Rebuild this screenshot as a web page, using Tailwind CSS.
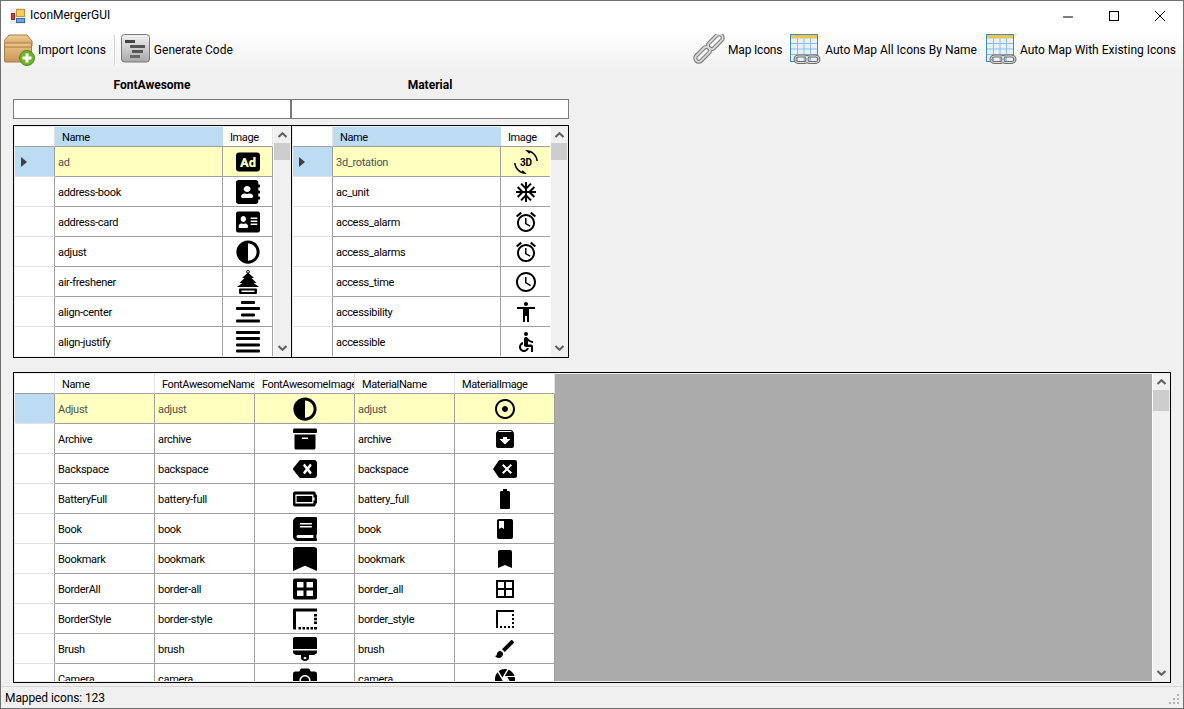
<!DOCTYPE html>
<html lang="en">

<head>
  <meta charset="UTF-8">
  <title>IconMergerGUI</title>
  <script src="https://cdn.jsdelivr.net/npm/@tailwindcss/browser@4"></script>
</head>

<body class="w-[1184px] h-[709px] overflow-hidden flex flex-col bg-[#f0f0f0] border border-[#707070] text-black text-[12px] [font-family:Roboto,sans-serif]">
  <!-- title bar -->
  <div class="h-[30px] shrink-0 bg-white flex items-center pl-[9px]">
    <svg width="16" height="16" viewBox="0 0 16 16">
      <rect x="0" y="0" width="16" height="16" fill="#ececec" />
      <rect x="6.500" y="1.500" width="8" height="7" fill="#f7cc55" stroke="#b8973f" />
      <rect x="1.500" y="5.500" width="3" height="6" fill="#d8433a" stroke="#8a2a24" />
      <rect x="6.500" y="10.500" width="8" height="4" fill="#6aa2e4" stroke="#3a6cac" />
    </svg>
    <span class="ml-[4px] mb-[2px] text-[12px]">IconMergerGUI</span>
    <div class="ml-auto flex items-center">
      <div class="w-[46px] h-[30px] flex items-center justify-center">
        <svg width="12" height="12" viewBox="0 0 12 12"><path d="M1 7h10" stroke="#000" fill="none" /></svg>
      </div>
      <div class="w-[46px] h-[30px] flex items-center justify-center">
        <svg width="12" height="12" viewBox="0 0 12 12"><rect x="1.500" y="1.500" width="9" height="9" stroke="#000" fill="none" /></svg>
      </div>
      <div class="w-[46px] h-[30px] flex items-center justify-center">
        <svg width="12" height="12" viewBox="0 0 12 12"><path d="M1 1l10 10M11 1L1 11" stroke="#000" fill="none" /></svg>
      </div>
    </div>
  </div>

  <!-- toolbar -->
  <div class="h-[41px] shrink-0 flex items-center justify-between pb-[3px] pl-[3px] pr-[7px] bg-gradient-to-b from-white to-[#f0f0f0]">
    <div class="flex items-center">
      <svg width="32" height="32" viewBox="0 0 32 32">
        <defs>
          <linearGradient id="boxTop" x1="0" y1="0" x2="0" y2="1"><stop offset="0" stop-color="#f0d09a" /><stop offset="1" stop-color="#cf9f5c" /></linearGradient>
          <linearGradient id="boxFront" x1="0" y1="0" x2="0" y2="1"><stop offset="0" stop-color="#eec488" /><stop offset="1" stop-color="#c8945a" /></linearGradient>
        </defs>
        <path d="M5 1h18l5 6v5H0V7z" fill="url(#boxTop)" stroke="#a67c45" />
        <rect x="0.500" y="9" width="27" height="19" rx="1" fill="url(#boxFront)" stroke="#a67c45" />
        <path d="M1 13h26" stroke="#a67c45" />
        <circle cx="23" cy="24" r="7.500" fill="#6fb52c" stroke="#4c8a18" />
        <path d="M23 19.500v9M18.500 24h9" stroke="#fff" stroke-width="3" />
      </svg>
      <span class="ml-[2px]">Import Icons</span>
      <div class="w-[2px] h-[30px] ml-[8px] mr-[3px] bg-[#d4d4d4] border-r border-white"></div>
      <svg width="32" height="32" viewBox="0 0 32 32">
        <defs>
          <linearGradient id="genBg" x1="0" y1="0" x2="0" y2="1"><stop offset="0" stop-color="#f2f2f2" /><stop offset="1" stop-color="#a8a8a8" /></linearGradient>
        </defs>
        <rect x="2.500" y="0.500" width="28" height="27.500" rx="3" fill="url(#genBg)" stroke="#777" />
        <rect x="6" y="6" width="10" height="3" fill="#444" />
        <rect x="11" y="11" width="15" height="3" fill="#555" />
        <rect x="13" y="16" width="11" height="3" fill="#555" />
        <rect x="11" y="21" width="10" height="3" fill="#666" />
      </svg>
      <span class="ml-[3px]">Generate Code</span>
    </div>
    <div class="flex items-center">
      <svg width="32" height="32" viewBox="0 0 32 32">
        <g fill="none" transform="rotate(45 16 14)">
          <g stroke="#7d7d7d" stroke-width="4">
            <rect x="12.500" y="-4" width="7" height="18" rx="3.500" />
            <rect x="12.500" y="14" width="7" height="18" rx="3.500" />
          </g>
          <g stroke="#dcdcdc" stroke-width="1.800">
            <rect x="12.500" y="-4" width="7" height="18" rx="3.500" />
            <rect x="12.500" y="14" width="7" height="18" rx="3.500" />
          </g>
        </g>
      </svg>
      <span class="ml-[3px] tracking-[-0.2px]">Map Icons</span>
      <svg class="ml-[7px]" width="32" height="32" viewBox="0 0 32 32">
        <rect x="1.500" y="0.500" width="27" height="27" fill="#e6f1fa" stroke="#3c8cc4" />
        <rect x="2" y="1" width="26" height="3.500" fill="#f4c44c" />
        <path d="M2 9.500h26M2 15h26M2 20.500h26M8.500 4.500V27M15 4.500V27M21.500 4.500V27" stroke="#8cbce0" fill="none" />
        <g fill="none">
          <rect x="6" y="22" width="13" height="6.500" rx="3.200" stroke="#6e6e6e" stroke-width="3" />
          <rect x="17" y="22" width="13" height="6.500" rx="3.200" stroke="#6e6e6e" stroke-width="3" />
          <rect x="6" y="22" width="13" height="6.500" rx="3.200" stroke="#e0e0e0" stroke-width="1" />
          <rect x="17" y="22" width="13" height="6.500" rx="3.200" stroke="#e0e0e0" stroke-width="1" />
        </g>
      </svg>
      <span class="ml-[4px]">Auto Map All Icons By Name</span>
      <svg class="ml-[8px]" width="32" height="32" viewBox="0 0 32 32">
        <rect x="1.500" y="0.500" width="27" height="27" fill="#e6f1fa" stroke="#3c8cc4" />
        <rect x="2" y="1" width="26" height="3.500" fill="#f4c44c" />
        <path d="M2 9.500h26M2 15h26M2 20.500h26M8.500 4.500V27M15 4.500V27M21.500 4.500V27" stroke="#8cbce0" fill="none" />
        <g fill="none">
          <rect x="6" y="22" width="13" height="6.500" rx="3.200" stroke="#6e6e6e" stroke-width="3" />
          <rect x="17" y="22" width="13" height="6.500" rx="3.200" stroke="#6e6e6e" stroke-width="3" />
          <rect x="6" y="22" width="13" height="6.500" rx="3.200" stroke="#e0e0e0" stroke-width="1" />
          <rect x="17" y="22" width="13" height="6.500" rx="3.200" stroke="#e0e0e0" stroke-width="1" />
        </g>
      </svg>
      <span class="ml-[3px]">Auto Map With Existing Icons</span>
    </div>
  </div>

  <!-- main area -->
  <div class="pl-[12px] shrink-0">
    <div class="flex h-[27px] pb-[2px] items-center font-bold">
      <div class="w-[278px] text-center">FontAwesome</div>
      <div class="w-[278px] text-center">Material</div>
    </div>
    <div class="flex mb-[6px]">
      <input class="w-[278px] h-[20px] bg-white border border-[#7a7a7a]">
      <input class="w-[278px] h-[20px] bg-white border border-[#7a7a7a]">
    </div>
    <div class="flex">
      <div id="fa-grid" class="w-[278px] h-[233px]"></div>
      <div id="material-grid" class="w-[278px] h-[233px]"></div>
    </div>
    <div id="map-grid" class="w-[1158px] h-[311px] mt-[14px]"></div>
  </div>

  <!-- status bar -->
  <div class="flex-1 mt-[3px] border-t border-[#d9d9d9] flex items-center justify-between pl-[4px] pr-[3px] relative">
    <span class="tracking-[-0.1px]">Mapped icons: 123</span>
    <svg class="absolute right-[3px] bottom-[3px]" width="12" height="12" viewBox="0 0 12 12" fill="#b4b4b4">
      <rect x="9" y="1" width="2" height="2" />
      <rect x="5" y="5" width="2" height="2" />
      <rect x="9" y="5" width="2" height="2" />
      <rect x="1" y="9" width="2" height="2" />
      <rect x="5" y="9" width="2" height="2" />
      <rect x="9" y="9" width="2" height="2" />
    </svg>
  </div>

  <script>
    // [viewBox, inner svg]
    const icons = {
      'fa-ad': ['0 0 24 24', '<rect x="0" y="2.500" width="24" height="19" rx="3" fill="#000"/><text x="12" y="16.500" text-anchor="middle" font-family="Roboto" font-weight="900" font-size="13" fill="#ffffc0">Ad</text>'],
      'fa-address-book': ['0 0 448 512', '<path d="M436 160c6.6 0 12-5.4 12-12v-40c0-6.6-5.4-12-12-12h-20V48c0-26.5-21.5-48-48-48H48C21.5 0 0 21.5 0 48v416c0 26.5 21.5 48 48 48h320c26.5 0 48-21.5 48-48v-48h20c6.6 0 12-5.4 12-12v-40c0-6.6-5.4-12-12-12h-20v-64h20c6.6 0 12-5.4 12-12v-40c0-6.6-5.4-12-12-12h-20v-64h20zm-228-32c35.3 0 64 28.7 64 64s-28.7 64-64 64-64-28.7-64-64 28.7-64 64-64zm112 236.8c0 10.6-10 19.2-22.4 19.2H118.4C106 384 96 375.4 96 364.8v-19.2c0-31.8 30.1-57.6 67.2-57.6h5c12.3 5.1 25.7 8 39.8 8s27.6-2.9 39.8-8h5c37.1 0 67.2 25.8 67.2 57.6v19.2z"/>'],
      'fa-address-card': ['0 0 576 512', '<path d="M528 32H48C21.5 32 0 53.5 0 80v352c0 26.5 21.5 48 48 48h480c26.5 0 48-21.5 48-48V80c0-26.5-21.5-48-48-48zm-352 96c35.3 0 64 28.7 64 64s-28.7 64-64 64-64-28.7-64-64 28.7-64 64-64zm112 236.8c0 10.6-10 19.2-22.4 19.2H86.4C74 384 64 375.4 64 364.8v-19.2c0-31.8 30.1-57.6 67.2-57.6h5c12.3 5.1 25.7 8 39.8 8s27.6-2.9 39.8-8h5c37.1 0 67.2 25.8 67.2 57.6v19.2zM512 312c0 4.4-3.6 8-8 8H360c-4.4 0-8-3.6-8-8v-16c0-4.4 3.6-8 8-8h144c4.4 0 8 3.6 8 8v16zm0-64c0 4.4-3.6 8-8 8H360c-4.4 0-8-3.6-8-8v-16c0-4.4 3.6-8 8-8h144c4.4 0 8 3.6 8 8v16zm0-64c0 4.4-3.6 8-8 8H360c-4.4 0-8-3.6-8-8v-16c0-4.4 3.6-8 8-8h144c4.4 0 8 3.6 8 8v16z"/>'],
      'fa-adjust': ['0 0 512 512', '<path d="M8 256c0 136.966 111.033 248 248 248s248-111.034 248-248S392.966 8 256 8 8 119.033 8 256zm248 184V72c101.705 0 184 82.311 184 184 0 101.705-82.311 184-184 184z"/>'],
      'fa-air-freshener': ['0 0 24 24', '<circle cx="12" cy="1.8" r="1.4" fill="none" stroke="#000"/><path d="M12 2.5l6 5.5h-2.5l5 5h-3l5.5 4H1l5.500-4h-3l5-5H6z"/><path fill-rule="evenodd" d="M4 18.500h16a1 1 0 0 1 1 1V23a1 1 0 0 1-1 1H4a1 1 0 0 1-1-1v-3.500a1 1 0 0 1 1-1zM5.500 20.500v1.500h13v-1.500z"/>'],
      'fa-align-center': ['0 0 24 24', '<rect x="5" y="1" width="14" height="3" rx="1"/><rect x="0" y="7" width="24" height="3" rx="1"/><rect x="5" y="13.500" width="14" height="3" rx="1"/><rect x="0" y="19.500" width="24" height="3" rx="1"/>'],
      'fa-align-justify': ['0 0 24 24', '<rect x="0" y="1" width="24" height="3" rx="1"/><rect x="0" y="7" width="24" height="3" rx="1"/><rect x="0" y="13.500" width="24" height="3" rx="1"/><rect x="0" y="19.500" width="24" height="3" rx="1"/>'],
      'fa-archive': ['0 0 512 512', '<path d="M32 448c0 17.7 14.3 32 32 32h384c17.7 0 32-14.3 32-32V160H32v288zm160-212c0-6.600 5.400-12 12-12h104c6.600 0 12 5.400 12 12v8c0 6.600-5.400 12-12 12H204c-6.600 0-12-5.400-12-12v-8zM480 32H32C14.300 32 0 46.300 0 64v48c0 8.800 7.200 16 16 16h480c8.800 0 16-7.200 16-16V64c0-17.700-14.300-32-32-32z"/>'],
      'fa-backspace': ['0 0 640 512', '<path d="M576 64H205.260A63.970 63.970 0 0 0 160 82.750L9.370 233.370c-12.500 12.500-12.500 32.760 0 45.250L160 429.250c12 12 28.280 18.750 45.250 18.750H576c35.350 0 64-28.650 64-64V128c0-35.350-28.650-64-64-64zm-84.690 254.060c6.250 6.250 6.250 16.380 0 22.630l-22.620 22.620c-6.250 6.250-16.380 6.250-22.630 0L384 301.250l-62.060 62.060c-6.250 6.250-16.380 6.250-22.630 0l-22.620-22.620c-6.250-6.250-6.250-16.380 0-22.630L338.750 256l-62.060-62.060c-6.250-6.250-6.250-16.380 0-22.630l22.620-22.620c6.250-6.250 16.380-6.250 22.630 0L384 210.750l62.060-62.060c6.250-6.250 16.380-6.250 22.630 0l22.620 22.620c6.250 6.250 6.250 16.380 0 22.630L429.250 256l62.060 62.060z"/>'],
      'fa-battery-full': ['0 0 640 512', '<path d="M544 160v64h32v64h-32v64H64V160h480m16-64H48c-26.510 0-48 21.490-48 48v224c0 26.510 21.490 48 48 48h512c26.510 0 48-21.490 48-48v-16h8c13.255 0 24-10.745 24-24V184c0-13.255-10.745-24-24-24h-8v-16c0-26.510-21.490-48-48-48zm-48 96H96v128h416V192z"/>'],
      'fa-book': ['0 0 448 512', '<path d="M448 360V24c0-13.300-10.700-24-24-24H96C43 0 0 43 0 96v320c0 53 43 96 96 96h328c13.300 0 24-10.700 24-24v-16c0-7.500-3.500-14.300-8.900-18.700-4.200-15.400-4.200-59.300 0-74.700 5.400-4.300 8.900-11.100 8.900-18.600zM128 134c0-3.300 2.700-6 6-6h212c3.300 0 6 2.700 6 6v20c0 3.300-2.700 6-6 6H134c-3.300 0-6-2.700-6-6v-20zm0 64c0-3.300 2.700-6 6-6h212c3.300 0 6 2.700 6 6v20c0 3.300-2.700 6-6 6H134c-3.300 0-6-2.700-6-6v-20zm253.400 250H96c-17.700 0-32-14.300-32-32 0-17.600 14.400-32 32-32h285.400c-1.900 17.100-1.900 46.900 0 64z"/>'],
      'fa-bookmark': ['0 0 384 512', '<path d="M0 512V48C0 21.490 21.490 0 48 0h288c26.510 0 48 21.490 48 48v464L192 400 0 512z"/>'],
      'fa-border-all': ['0 0 24 24', '<path fill-rule="evenodd" d="M2 1.500h20a2 2 0 0 1 2 2v17a2 2 0 0 1-2 2H2a2 2 0 0 1-2-2v-17a2 2 0 0 1 2-2zM4 5v5.500h6.500V5zm9.500 0v5.500H20V5zM4 13.500V19h6.500v-5.500zm9.500 0V19H20v-5.500z"/>'],
      'fa-border-style': ['0 0 24 24', '<path d="M1 1.500h23v3H3v18H1a1 1 0 0 1-1-1v-19a1 1 0 0 1 1-1z"/><rect x="21" y="7" width="3" height="2.500"/><rect x="21" y="10.800" width="3" height="2.500"/><rect x="21" y="14.500" width="3" height="2.500"/><rect x="21" y="20" width="3" height="2.500"/><rect x="5.500" y="20" width="2.500" height="2.500"/><rect x="9.500" y="20" width="2.500" height="2.500"/><rect x="13.500" y="20" width="2.500" height="2.500"/><rect x="17.500" y="20" width="2.500" height="2.500"/>'],
      'fa-brush': ['0 0 384 512', '<path d="M352 0H32C14.330 0 0 14.330 0 32v224h384V32c0-17.670-14.330-32-32-32zM0 320c0 35.350 28.660 64 64 64h64v64c0 35.350 28.660 64 64 64s64-28.650 64-64v-64h64c35.340 0 64-28.650 64-64v-32H0v32zm192 104c13.250 0 24 10.740 24 24 0 13.250-10.750 24-24 24s-24-10.750-24-24c0-13.260 10.750-24 24-24z"/>'],
      'fa-camera': ['0 0 512 512', '<path d="M512 144v288c0 26.500-21.500 48-48 48H48c-26.500 0-48-21.500-48-48V144c0-26.500 21.500-48 48-48h88l12.300-32.900c7-18.700 24.900-31.100 44.900-31.100h125.500c20 0 37.900 12.400 44.900 31.100L376 96h88c26.500 0 48 21.500 48 48zM376 288c0-66.200-53.800-120-120-120s-120 53.800-120 120 53.800 120 120 120 120-53.800 120-120zm-32 0c0 48.500-39.500 88-88 88s-88-39.500-88-88 39.500-88 88-88 88 39.500 88 88z"/>'],
      'md-3d_rotation': ['0 0 24 24', '<path d="M7.520 21.480C4.250 19.940 1.910 16.760 1.550 13H.05C.56 19.160 5.710 24 12 24l.66-.03-3.810-3.810-1.330 1.320zM12 0l-.66.03 3.810 3.810 1.330-1.330c3.270 1.550 5.610 4.720 5.960 8.480h1.500C23.440 4.840 18.290 0 12 0z"/><text x="12" y="16" text-anchor="middle" font-family="Roboto" font-weight="700" font-size="10">3D</text>'],
      'md-ac_unit': ['0 0 24 24', '<path d="M22 11h-4.170l3.240-3.240-1.410-1.420L15 11h-2V9l4.660-4.660-1.420-1.410L13 6.170V2h-2v4.170L7.760 2.930 6.340 4.340 11 9v2H9L4.340 6.340 2.930 7.760 6.170 11H2v2h4.170l-3.240 3.240 1.410 1.420L9 13h2v2l-4.660 4.660 1.420 1.410L11 17.830V22h2v-4.170l3.240 3.240 1.420-1.410L13 15v-2h2l4.660 4.660 1.410-1.420L17.830 13H22z"/>'],
      'md-access_alarm': ['0 0 24 24', '<path d="M22 5.720l-4.600-3.860-1.290 1.530 4.600 3.860L22 5.720zM7.880 3.390L6.600 1.860 2 5.710l1.290 1.530 4.590-3.850zM12.500 8H11v6l4.750 2.850.75-1.230-4-2.370V8zM12 4c-4.970 0-9 4.030-9 9s4.030 9 9 9 9-4.030 9-9-4.030-9-9-9zm0 16c-3.870 0-7-3.130-7-7s3.130-7 7-7 7 3.130 7 7-3.130 7-7 7z"/>'],
      'md-access_time': ['0 0 24 24', '<path d="M11.990 2C6.470 2 2 6.480 2 12s4.470 10 9.990 10C17.520 22 22 17.520 22 12S17.520 2 11.990 2zM12 20c-4.420 0-8-3.580-8-8s3.580-8 8-8 8 3.580 8 8-3.580 8-8 8zm.5-13H11v6l5.250 3.150.75-1.230-4.500-2.670z"/>'],
      'md-accessibility': ['0 0 24 24', '<path d="M12 2c1.100 0 2 .9 2 2s-.9 2-2 2-2-.9-2-2 .9-2 2-2zm9 7h-6v13h-2v-6h-2v6H9V9H3V7h18v2z"/>'],
      'md-accessible': ['0 0 24 24', '<circle cx="12" cy="4" r="2"/><path d="M19 13v-2c-1.540.02-3.090-.75-4.070-1.830l-1.290-1.430c-.17-.19-.38-.34-.61-.45-.01 0-.01-.01-.02-.01H13c-.35-.2-.75-.3-1.190-.26C10.760 7.110 10 8.040 10 9.090V15c0 1.100.9 2 2 2h5v5h2v-5.500c0-1.100-.9-2-2-2h-3v-3.450c1.290 1.070 3.250 1.940 5 1.950zm-6.170 5c-.41 1.160-1.520 2-2.830 2-1.660 0-3-1.340-3-3 0-1.310.84-2.410 2-2.830V12.100c-2.280.46-4 2.480-4 4.900 0 2.760 2.240 5 5 5 2.420 0 4.440-1.720 4.900-4h-2.070z"/>'],
      'md-adjust': ['0 0 24 24', '<path d="M12 2C6.480 2 2 6.480 2 12s4.480 10 10 10 10-4.480 10-10S17.520 2 12 2zm0 18c-4.420 0-8-3.580-8-8s3.580-8 8-8 8 3.580 8 8-3.580 8-8 8zm3-8c0 1.660-1.340 3-3 3s-3-1.340-3-3 1.340-3 3-3 3 1.340 3 3z"/>'],
      'md-archive': ['0 0 24 24', '<path d="M20.540 5.230l-1.390-1.680C18.880 3.210 18.470 3 18 3H6c-.47 0-.88.21-1.160.55L3.460 5.230C3.170 5.570 3 6.020 3 6.500V19c0 1.100.9 2 2 2h14c1.100 0 2-.9 2-2V6.500c0-.48-.17-.93-.46-1.270zM12 17.500L6.500 12H10v-2h4v2h3.500L12 17.500zM5.120 5l.81-1h12l.94 1H5.120z"/>'],
      'md-backspace': ['0 0 24 24', '<path d="M22 3H7c-.69 0-1.230.35-1.590.88L0 12l5.410 8.110c.36.53.9.89 1.590.89h15c1.100 0 2-.9 2-2V5c0-1.100-.9-2-2-2zm-3 12.590L17.590 17 14 13.410 10.410 17 9 15.590 12.590 12 9 8.410 10.410 7 14 10.590 17.590 7 19 8.410 15.410 12 19 15.590z"/>'],
      'md-battery_full': ['0 0 24 24', '<path d="M15.670 4H14V2h-4v2H8.330C7.600 4 7 4.600 7 5.330v15.330C7 21.400 7.600 22 8.330 22h7.330c.74 0 1.340-.6 1.340-1.330V5.330C17 4.600 16.400 4 15.670 4z"/>'],
      'md-book': ['0 0 24 24', '<path d="M18 2H6c-1.100 0-2 .9-2 2v16c0 1.100.9 2 2 2h12c1.100 0 2-.9 2-2V4c0-1.100-.9-2-2-2zM6 4h5v8l-2.500-1.500L6 12V4z"/>'],
      'md-bookmark': ['0 0 24 24', '<path d="M17 3H7c-1.100 0-1.990.9-1.990 2L5 21l7-3 7 3V5c0-1.100-.9-2-2-2z"/>'],
      'md-border_all': ['0 0 24 24', '<path d="M3 3v18h18V3H3zm8 16H5v-6h6v6zm0-8H5V5h6v6zm8 8h-6v-6h6v6zm0-8h-6V5h6v6z"/>'],
      'md-border_style': ['0 0 24 24', '<path d="M15 21h2v-2h-2v2zm4 0h2v-2h-2v2zM7 21h2v-2H7v2zm4 0h2v-2h-2v2zm8-4h2v-2h-2v2zm0-4h2v-2h-2v2zM3 3v18h2V5h16V3H3zm16 6h2V7h-2v2z"/>'],
      'md-brush': ['0 0 24 24', '<path d="M7 14c-1.660 0-3 1.340-3 3 0 1.310-1.160 2-2 2 .92 1.220 2.490 2 4 2 2.210 0 4-1.790 4-4 0-1.660-1.340-3-3-3zm13.710-9.370l-1.340-1.340c-.39-.39-1.020-.39-1.410 0L9 12.250 11.750 15l8.960-8.960c.39-.39.39-1.020 0-1.410z"/>'],
      'md-camera': ['0 0 24 24', '<path d="M9.400 10.500l4.770-8.260C13.470 2.090 12.750 2 12 2c-2.400 0-4.600.85-6.320 2.250l3.660 6.350.06-.1zM21.540 9c-.92-2.920-3.150-5.260-6-6.340L11.880 9h9.660zm.26 1h-7.490l.29.5 4.760 8.250C21 16.970 22 14.610 22 12c0-.69-.07-1.350-.2-2zM8.540 12l-3.900-6.750C3.010 7.030 2 9.390 2 12c0 .69.07 1.350.2 2h7.490l-1.150-2zm-6.080 3c.92 2.920 3.150 5.260 6 6.340L12.120 15H2.460zm11.270 0l-3.900 6.760c.7.15 1.420.24 2.170.24 2.400 0 4.600-.85 6.320-2.250l-3.660-6.350-.93 1.600z"/>'],
    }

    const icon = (key) => {
      const [box, body] = icons[key]
      return `<svg class="w-[24px] h-[24px] shrink-0" viewBox="${box}" preserveAspectRatio="none">${body}</svg>`
    }

    const chevron = (points) => `
      <div class="h-[16px] shrink-0 flex items-center justify-center">
        <svg width="9" height="6" viewBox="0 0 9 6"><polyline points="${points}" fill="none" stroke="#606060" stroke-width="2" /></svg>
      </div>`

    const scrollbar = (thumb) => `
      <div class="w-[17px] shrink-0 flex flex-col bg-[#f0f0f0] border-l border-white">
        ${chevron('0.5,5 4.5,1.200 8.500,5')}
        <div class="${thumb} shrink-0 bg-[#cdcdcd]"></div>
        <div class="flex-1"></div>
        ${chevron('0.5,1 4.5,4.800 8.500,1')}
      </div>`

    // columns: { title, width, image }
    const renderGrid = (el, { columns, rows, arrow, thumb, rest, noRight }) => {
      const head = columns.map(c => `
        <div class="${c.width} ${c.active ? 'bg-[#bcdcf4]' : 'bg-white border-r border-r-[#e3e3e3]'} shrink-0 h-[20px] pt-[4px] pl-[7px] border-b border-b-[#a0a0a0] overflow-hidden whitespace-nowrap flex items-center tracking-[-0.4px]">${c.title}</div>`).join('')

      const body = rows.map((row, i) => {
        const selected = i === 0
        const cells = row.map((value, n) => {
          const col = columns[n]
          return `<div class="${col.width} shrink-0 h-[30px] border-r border-b border-[#a0a0a0] flex items-center overflow-hidden whitespace-nowrap ${col.image ? 'justify-center' : 'pl-[3px] pt-[4px] tracking-[-0.3px]'}">${col.image ? icon(value) : value}</div>`
        }).join('')
        return `
          <div class="flex w-max ${selected ? 'bg-[#ffffc0] text-[#505050]' : 'bg-white'}">
            <div class="w-[40px] shrink-0 h-[30px] flex items-center border-r border-r-[#a0a0a0] border-b border-b-[#e3e3e3] ${selected ? 'bg-[#bcdcf4]' : 'bg-white'} pl-[6px]">
              ${selected && arrow ? '<svg width="6" height="10" viewBox="0 0 6 10"><polygon points="0,0 6,5 0,10" fill="#404040" /></svg>' : ''}
            </div>
            ${cells}
          </div>`
      }).join('')

      el.innerHTML = `
        <div class="w-full h-full border border-black ${noRight ? 'border-r-0' : ''}">
          <div class="w-full h-full border border-[#f0f0f0] flex bg-[#f0f0f0] text-[11px]">
            <div class="flex flex-col overflow-hidden ${rest ? 'flex-1 bg-[#ababab]' : ''}">
              <div class="flex w-max shrink-0">
                <div class="w-[40px] h-[20px] shrink-0 bg-white border-r border-r-[#e3e3e3] border-b border-b-[#a0a0a0]"></div>
                ${head}
              </div>
              ${body}
            </div>
            ${scrollbar(thumb)}
          </div>
        </div>`
    }

    const pickerColumns = [
      { title: 'Name', width: 'w-[168px]', active: true },
      { title: 'Image', width: 'w-[50px]', image: true },
    ]

    renderGrid(document.getElementById('fa-grid'), {
      columns: pickerColumns,
      arrow: true,
      noRight: true,
      thumb: 'h-[17px]',
      rows: [
        ['ad', 'fa-ad'],
        ['address-book', 'fa-address-book'],
        ['address-card', 'fa-address-card'],
        ['adjust', 'fa-adjust'],
        ['air-freshener', 'fa-air-freshener'],
        ['align-center', 'fa-align-center'],
        ['align-justify', 'fa-align-justify'],
      ],
    })

    renderGrid(document.getElementById('material-grid'), {
      columns: pickerColumns,
      arrow: true,
      thumb: 'h-[17px]',
      rows: [
        ['3d_rotation', 'md-3d_rotation'],
        ['ac_unit', 'md-ac_unit'],
        ['access_alarm', 'md-access_alarm'],
        ['access_alarms', 'md-access_alarm'],
        ['access_time', 'md-access_time'],
        ['accessibility', 'md-accessibility'],
        ['accessible', 'md-accessible'],
      ],
    })

    renderGrid(document.getElementById('map-grid'), {
      columns: [
        { title: 'Name', width: 'w-[100px]' },
        { title: 'FontAwesomeName', width: 'w-[100px]' },
        { title: 'FontAwesomeImage', width: 'w-[100px]', image: true },
        { title: 'MaterialName', width: 'w-[100px]' },
        { title: 'MaterialImage', width: 'w-[100px]', image: true },
      ],
      thumb: 'h-[21px]',
      rest: true,
      rows: [
        ['Adjust', 'adjust', 'fa-adjust', 'adjust', 'md-adjust'],
        ['Archive', 'archive', 'fa-archive', 'archive', 'md-archive'],
        ['Backspace', 'backspace', 'fa-backspace', 'backspace', 'md-backspace'],
        ['BatteryFull', 'battery-full', 'fa-battery-full', 'battery_full', 'md-battery_full'],
        ['Book', 'book', 'fa-book', 'book', 'md-book'],
        ['Bookmark', 'bookmark', 'fa-bookmark', 'bookmark', 'md-bookmark'],
        ['BorderAll', 'border-all', 'fa-border-all', 'border_all', 'md-border_all'],
        ['BorderStyle', 'border-style', 'fa-border-style', 'border_style', 'md-border_style'],
        ['Brush', 'brush', 'fa-brush', 'brush', 'md-brush'],
        ['Camera', 'camera', 'fa-camera', 'camera', 'md-camera'],
      ],
    })
  </script>
</body>

</html>
